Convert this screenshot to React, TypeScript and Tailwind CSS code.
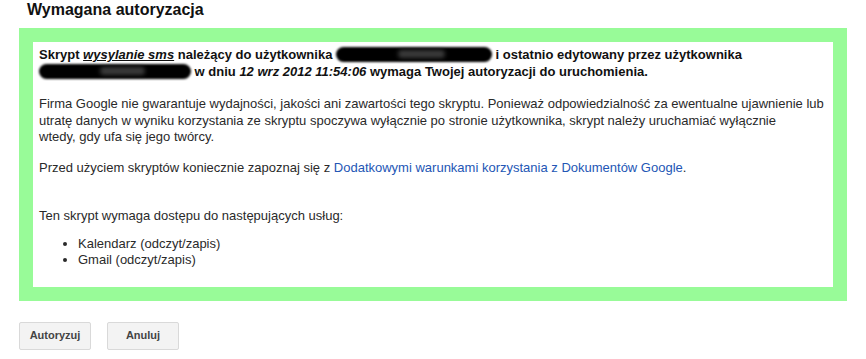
import React from "react";

function Blob({ w }: { w: number }) {
  return (
    <span className="relative inline-block align-[-3px] h-[15px]" style={{ width: w }}>
      <span className="absolute inset-0 rounded-full bg-black blur-[1px]" />
      <span className="absolute left-[40%] top-[3px] h-[8px] w-[30%] rounded-full bg-[#3a3a3a] blur-[2px]" />
    </span>
  );
}

export default function App() {
  return (
    <div className="w-[866px] h-[359px] bg-white text-[#222] [font-family:'Liberation_Sans',Arial,sans-serif] overflow-hidden">
      <h1 className="pl-[27px] pt-0 text-[16px] leading-[20px] font-bold text-[#111]">
        Wymagana autoryzacja
      </h1>
      <div className="ml-[19px] mt-[8px] w-[828px] border-[14px] border-[#98fb98] bg-white pl-[6px] pr-[2px] pt-[5px] pb-[18px] text-[13px] leading-[16.5px]">
        <p className="font-bold text-[#111]">
          Skrypt <span className="italic underline underline-offset-1">wysylanie sms</span> należący do użytkownika{" "}
          <Blob w={156} /> i ostatnio edytowany przez użytkownika
          <br />
          <Blob w={152} /> w dniu <span className="italic">12 wrz 2012 11:54:06</span> wymaga Twojej autoryzacji do uruchomienia.
        </p>
        <p className="mt-[16px] text-[#2a2a2a]">
          Firma Google nie gwarantuje wydajności, jakości ani zawartości tego skryptu. Ponieważ odpowiedzialność za ewentualne ujawnienie lub
          <br />
          utratę danych w wyniku korzystania ze skryptu spoczywa wyłącznie po stronie użytkownika, skrypt należy uruchamiać wyłącznie
          <br />
          wtedy, gdy ufa się jego twórcy.
        </p>
        <p className="mt-[14px] text-[#2a2a2a]">
          Przed użyciem skryptów koniecznie zapoznaj się z{" "}
          <a className="text-[#2356b5]">Dodatkowymi warunkami korzystania z Dokumentów Google</a>.
        </p>
        <p className="mt-[32px] text-[#2a2a2a]">Ten skrypt wymaga dostępu do następujących usług:</p>
        <ul className="mt-[11px] pl-[39px] list-disc text-[#2a2a2a]">
          <li>Kalendarz (odczyt/zapis)</li>
          <li>Gmail (odczyt/zapis)</li>
        </ul>
      </div>
      <div className="flex gap-[16px] pl-[19px] pt-[21px]">
        <button className="w-[72px] h-[28px] rounded-[2px] border border-[#d9d9d9] bg-[#f3f3f3] text-[11px] font-bold text-[#444]">
          Autoryzuj
        </button>
        <button className="w-[72px] h-[28px] rounded-[2px] border border-[#d9d9d9] bg-[#f3f3f3] text-[11px] font-bold text-[#444]">
          Anuluj
        </button>
      </div>
    </div>
  );
}
